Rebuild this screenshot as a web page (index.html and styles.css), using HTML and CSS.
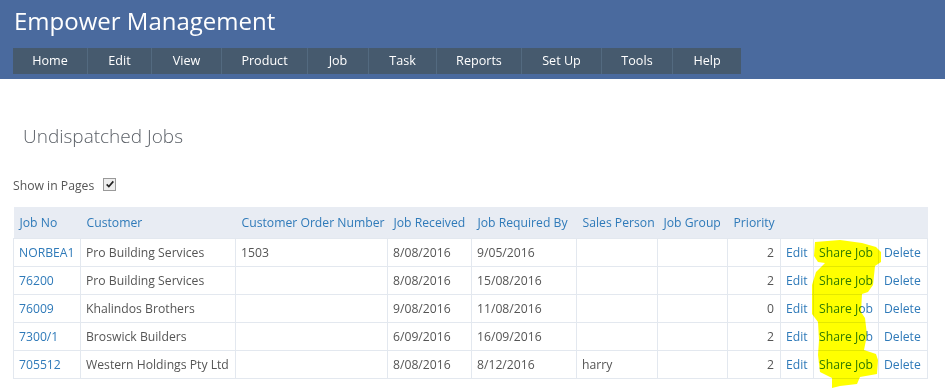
FILE: index.html
```html
<!DOCTYPE html>
<html lang="en">
<head>
    <meta charset="UTF-8">
    <meta name="viewport" content="width=device-width, initial-scale=1.0">
    <title>Undispatched Jobs - Empower Management</title>
    <link rel="stylesheet" href="styles.css">
</head>
<body>
    <header class="site-header">
        <div class="brand">Empower Management</div>
        <nav>
            <ul class="menu">
                <li><a href="#">Home</a></li>
                <li><a href="#">Edit</a></li>
                <li><a href="#">View</a></li>
                <li><a href="#">Product</a></li>
                <li><a href="#">Job</a></li>
                <li><a href="#">Task</a></li>
                <li><a href="#">Reports</a></li>
                <li><a href="#">Set Up</a></li>
                <li><a href="#">Tools</a></li>
                <li><a href="#">Help</a></li>
            </ul>
        </nav>
    </header>

    <div class="container">
        <h2 class="page-title">Undispatched Jobs</h2>

        <label class="show-pages">
            Show in Pages
            <span class="fake-check">
                <svg viewBox="0 0 12 12" width="10" height="10"><path d="M2 6.5 L4.6 9 L10 2.8" fill="none" stroke="#222" stroke-width="2"/></svg>
            </span>
        </label>

        <div class="table-wrap">
            <table class="jobs">
                <colgroup>
                    <col style="width:67px">
                    <col style="width:155px">
                    <col style="width:152px">
                    <col style="width:84px">
                    <col style="width:105px">
                    <col style="width:81px">
                    <col style="width:70px">
                    <col style="width:53px">
                    <col style="width:33px">
                    <col style="width:65px">
                    <col style="width:49px">
                </colgroup>
                <thead>
                    <tr>
                        <th><a href="#">Job No</a></th>
                        <th><a href="#">Customer</a></th>
                        <th><a href="#">Customer Order Number</a></th>
                        <th><a href="#">Job Received</a></th>
                        <th><a href="#">Job Required By</a></th>
                        <th><a href="#">Sales Person</a></th>
                        <th><a href="#">Job Group</a></th>
                        <th><a href="#">Priority</a></th>
                        <th></th>
                        <th></th>
                        <th></th>
                    </tr>
                </thead>
                <tbody>
                    <tr>
                        <td><a href="#">NORBEA1</a></td>
                        <td>Pro Building Services</td>
                        <td>1503</td>
                        <td>8/08/2016</td>
                        <td>9/05/2016</td>
                        <td></td>
                        <td></td>
                        <td class="num">2</td>
                        <td><a href="#">Edit</a></td>
                        <td><a href="#" class="share">Share Job</a></td>
                        <td><a href="#">Delete</a></td>
                    </tr>
                    <tr>
                        <td><a href="#">76200</a></td>
                        <td>Pro Building Services</td>
                        <td></td>
                        <td>8/08/2016</td>
                        <td>15/08/2016</td>
                        <td></td>
                        <td></td>
                        <td class="num">2</td>
                        <td><a href="#">Edit</a></td>
                        <td><a href="#" class="share">Share Job</a></td>
                        <td><a href="#">Delete</a></td>
                    </tr>
                    <tr>
                        <td><a href="#">76009</a></td>
                        <td>Khalindos Brothers</td>
                        <td></td>
                        <td>9/08/2016</td>
                        <td>11/08/2016</td>
                        <td></td>
                        <td></td>
                        <td class="num">0</td>
                        <td><a href="#">Edit</a></td>
                        <td><a href="#" class="share">Share Job</a></td>
                        <td><a href="#">Delete</a></td>
                    </tr>
                    <tr>
                        <td><a href="#">7300/1</a></td>
                        <td>Broswick Builders</td>
                        <td></td>
                        <td>6/09/2016</td>
                        <td>16/09/2016</td>
                        <td></td>
                        <td></td>
                        <td class="num">2</td>
                        <td><a href="#">Edit</a></td>
                        <td><a href="#" class="share">Share Job</a></td>
                        <td><a href="#">Delete</a></td>
                    </tr>
                    <tr>
                        <td><a href="#">705512</a></td>
                        <td>Western Holdings Pty Ltd</td>
                        <td></td>
                        <td>8/08/2016</td>
                        <td>8/12/2016</td>
                        <td>harry</td>
                        <td></td>
                        <td class="num">2</td>
                        <td><a href="#">Edit</a></td>
                        <td><a href="#" class="share">Share Job</a></td>
                        <td><a href="#">Delete</a></td>
                    </tr>
                </tbody>
            </table>

            <!-- highlighter scribble over the Share Job column -->
            <svg class="scribble" width="945" height="389" viewBox="0 0 945 389">
                <polygon fill="#ffff00" points="815,242 840,240 862,243 876,247 881,252 881,262 875,266 873,285 868,292 862,294 861,312 865,318 867,335 864,350 876,354 878,360 877,374 860,377 857,384 840,386 832,388 832,378 820,372 818,355 819,340 818,322 812,314 812,285 816,272 825,263 818,262 814,256"/>
            </svg>
        </div>
    </div>
</body>
</html>
```

FILE: styles.css
```css
:root {
    --header-blue: #4a6a9e;
    --menu-slate: #465a6e;
    --menu-line: #536a80;
    --link-color: #2f7ab9;
    --text-color: #555;
    --grid-line: #e3e8ef;
    --head-bg: #e8ecf3;
}

body {
    font-family: 'Segoe UI', 'Open Sans', 'Noto Sans', sans-serif;
    font-size: 12.2px;
    color: var(--text-color);
    background: white;
    margin: 0;
    padding: 0;
}

a {
    color: var(--link-color);
    text-decoration: none;
}

.site-header {
    background-color: var(--header-blue);
    height: 79px;
    padding: 0 13px;
    box-sizing: border-box;
}

.brand {
    color: white;
    font-size: 24px;
    line-height: 42px;
    margin-left: 1px;
}

.menu {
    list-style: none;
    margin: 6px 0 0;
    padding: 0;
    display: grid;
    grid-template-columns: 75px 64px 70px 86px 61px 68px 85px 80px 71px 68px;
    width: 728px;
    background-color: var(--menu-slate);
}

.menu li {
    border-right: 1px solid var(--menu-line);
    text-align: center;
}

.menu li:last-child {
    border-right: none;
}

.menu a {
    display: block;
    color: white;
    line-height: 26px;
    font-size: 12.6px;
}

.container {
    padding: 0 13px;
}

.page-title {
    font-weight: 300;
    font-size: 19px;
    margin: 0;
    padding: 44px 0 0 10px;
    line-height: 26px;
    color: #5a5f66;
}

.show-pages {
    display: flex;
    align-items: center;
    gap: 9px;
    margin-top: 28px;
    line-height: 18px;
}

.fake-check {
    width: 11px;
    height: 11px;
    border: 1px solid #999;
    background: #eee;
    display: flex;
    align-items: center;
    justify-content: center;
    margin-top: -4px;
}

.table-wrap {
    margin-top: 12px;
}

.jobs {
    border-collapse: collapse;
    table-layout: fixed;
    width: 914px;
}

.jobs th {
    background: var(--head-bg);
    font-weight: normal;
    text-align: left;
    height: 31px;
    padding: 0 6px;
    white-space: nowrap;
}

.jobs td {
    border: 1px solid var(--grid-line);
    height: 27px;
    padding: 0 5px;
    white-space: nowrap;
}

.jobs td.num {
    text-align: right;
    padding-right: 6px;
}

.scribble {
    position: absolute;
    left: 0;
    top: 0;
    mix-blend-mode: multiply;
    pointer-events: none;
}
```
